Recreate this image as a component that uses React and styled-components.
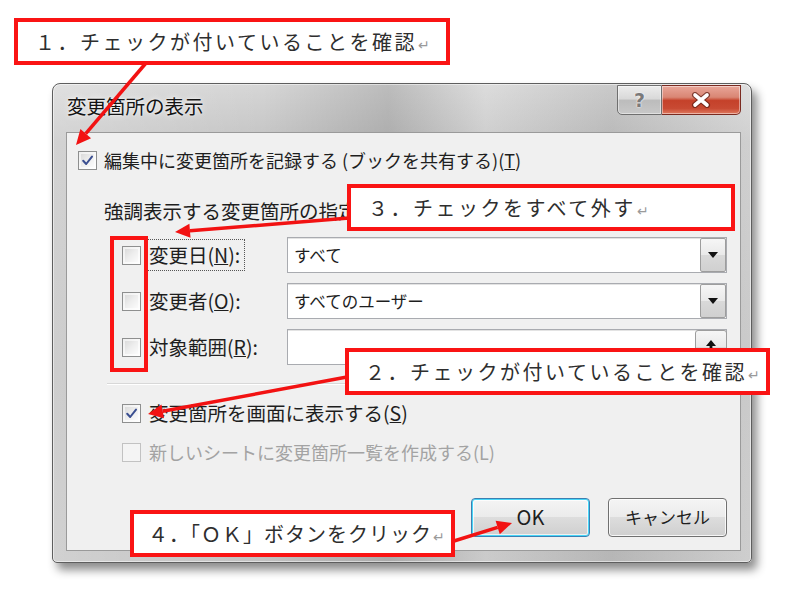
import React from 'react';
import styled, { createGlobalStyle } from 'styled-components';

const GlobalStyle = createGlobalStyle`
  html, body {
    margin: 0;
    padding: 0;
    background: #ffffff;
  }
  body {
    font-family: "Noto Sans CJK JP", "Noto Sans", sans-serif;
  }
`;

const jp = `"Noto Sans CJK JP", "Noto Sans", sans-serif`;

const Page = styled.div`
  position: relative;
  width: 800px;
  height: 594px;
  box-sizing: border-box;
  padding: 83px 0 0 52px;
  overflow: hidden;
  background: #ffffff;
`;

// ---- window frame ----
const Window = styled.div`
  width: 700px;
  height: 480px;
  box-sizing: border-box;
  padding: 0 10px 11px 13px;
  display: flex;
  flex-direction: column;
  border: 1px solid #5e5e5e;
  border-radius: 8px 8px 5px 5px;
  background:
    linear-gradient(90deg, rgba(255,255,255,0.25) 0%, rgba(0,0,0,0) 30%, rgba(0,0,0,0.12) 48%, rgba(255,255,255,0.15) 62%, rgba(0,0,0,0.06) 80%, rgba(255,255,255,0.2) 100%),
    linear-gradient(180deg, #d6d6d6 0%, #c4c4c4 12%, #bdbdbd 60%, #c2c2c2 100%);
  box-shadow: 5px 7px 10px rgba(0, 0, 0, 0.45), inset 0 0 0 1px rgba(255,255,255,0.5);
`;

const TitleBar = styled.div`
  height: 48px;
  display: flex;
  align-items: flex-start;
  justify-content: space-between;
`;

const Title = styled.div`
  margin: 10px 0 0 1px;
  font-family: ${jp};
  font-size: 19.5px;
  line-height: 24px;
  color: #141414;
  text-shadow: 0 0 6px rgba(255,255,255,0.9), 0 0 2px rgba(255,255,255,0.8);
`;

const CaptionButtons = styled.div`
  display: flex;
  margin-top: 1px;
`;

const CaptionButton = styled.div`
  width: ${(p) => p.width}px;
  height: 30px;
  box-sizing: border-box;
  display: flex;
  align-items: center;
  justify-content: center;
  border: 1px solid ${(p) => (p.close ? '#7a2a20' : '#6f6f6f')};
  border-left: ${(p) => (p.close ? 'none' : '1px solid #6f6f6f')};
  border-radius: ${(p) => (p.close ? '0 0 5px 0' : '0 0 0 5px')};
  background: ${(p) =>
    p.close
      ? 'linear-gradient(180deg, #e9a699 0%, #d98674 40%, #c5412a 52%, #c84a33 80%, #e07a5f 100%)'
      : 'linear-gradient(180deg, #ececec 0%, #d9d9d9 45%, #bcbcbc 52%, #c8c8c8 100%)'};
  box-shadow: inset 0 0 0 1px rgba(255,255,255,0.45);
  font-family: "DejaVu Sans", sans-serif;
  font-weight: bold;
  font-size: 19px;
  color: #7a7a7a;
  text-shadow: 0 0 2px #ffffff, 0 0 1px #ffffff;
`;

const Client = styled.div`
  flex: 1;
  box-sizing: border-box;
  border: 1px solid #9a9a9a;
  background: #f0f0f0;
  padding: 17px 13px 0 11px;
  display: flex;
  flex-direction: column;
  font-family: ${jp};
  font-size: 18px;
  color: #1e1e1e;
`;

// ---- checkbox ----
const Box = styled.span`
  flex: none;
  width: 19px;
  height: 19px;
  box-sizing: border-box;
  border: 1px solid ${(p) => (p.disabled ? '#c2c2c2' : '#8e8f8f')};
  background: ${(p) =>
    p.disabled
      ? '#f4f4f4'
      : 'linear-gradient(135deg, #d6d6d6 0%, #eeeeee 50%, #ffffff 100%)'};
  box-shadow: inset 0 0 0 2px ${(p) => (p.disabled ? '#f4f4f4' : 'rgba(255,255,255,0.6)')};
  display: flex;
  align-items: center;
  justify-content: center;
`;

const Check = ({ checked, disabled }) => (
  <Box disabled={disabled}>
    {checked && (
      <svg width="13" height="13" viewBox="0 0 13 13">
        <path d="M2.2 6.8 L5.2 10 L11 2.6" fill="none" stroke="#3b4f91" strokeWidth="2" strokeLinecap="round" strokeLinejoin="round" />
      </svg>
    )}
  </Box>
);

const CheckRow = styled.div`
  display: flex;
  align-items: center;
  gap: ${(p) => p.gap || 8}px;
  height: 20px;
  margin-top: ${(p) => p.top || 0}px;
  margin-left: ${(p) => p.indent || 0}px;
  font-size: ${(p) => p.size || 18}px;
  color: ${(p) => (p.disabled ? '#a3a3a3' : 'inherit')};
  line-height: 20px;
`;

const GroupLabel = styled.div`
  margin: 29px 0 0 26px;
  line-height: 24px;
  height: 24px;
  font-size: 19.5px;
  white-space: nowrap;
`;

const OptionGrid = styled.div`
  margin: 14px 0 0 44px;
  display: grid;
  grid-template-columns: 19px 128px 1fr;
  column-gap: 9px;
  row-gap: 10px;
  align-items: center;
`;

const OptLabel = styled.span`
  justify-self: start;
  font-size: 19.5px;
  line-height: 24px;
  padding: 3px 4px 3px 1px;
  margin-left: -2px;
  outline: ${(p) => (p.focused ? '1px dotted #555' : 'none')};
`;

const Field = styled.div`
  height: 36px;
  box-sizing: border-box;
  border: 1px solid #a9abb0;
  background: #ffffff;
  display: flex;
  align-items: center;
  padding: 0 0 0 6px;
  box-shadow: inset 0 1px 0 #e3e3e3;
`;

const FieldText = styled.span`
  flex: 1;
  font-size: 16.5px;
  line-height: 22px;
`;

const DropButton = styled.span`
  width: 26px;
  height: 34px;
  box-sizing: border-box;
  border: 1px solid #9d9d9d;
  border-radius: 2px;
  background: linear-gradient(180deg, #f6f6f6 0%, #e9e9e9 50%, #d9d9d9 51%, #d0d0d0 100%);
  display: flex;
  align-items: center;
  justify-content: center;
`;

const RefButton = styled(DropButton)`
  width: 32px;
  border-radius: 3px;
  margin-right: -1px;
`;

const Separator = styled.div`
  margin: 18px -13px 0 29px;
  height: 1px;
  background: #d8d8d8;
  border-bottom: 1px solid #ffffff;
`;

const ButtonRow = styled.div`
  display: flex;
  justify-content: flex-end;
  gap: 18px;
  margin-top: 36px;
`;

const PushButton = styled.div`
  width: 119px;
  height: 39px;
  box-sizing: border-box;
  border: 1px solid ${(p) => (p.primary ? '#3c7fb1' : '#707070')};
  border-radius: 4px;
  background: linear-gradient(180deg, #f4f4f4 0%, #ebebeb 49%, #dddddd 50%, #cfcfcf 100%);
  box-shadow: ${(p) =>
    p.primary
      ? 'inset 0 0 0 1px #48d6f8, inset 0 0 0 2px rgba(255,255,255,0.7)'
      : 'inset 0 0 0 1px rgba(255,255,255,0.8)'};
  display: flex;
  align-items: center;
  justify-content: center;
  font-size: ${(p) => (p.primary ? 20 : 17)}px;
  color: #1e1e1e;
  padding-bottom: 2px;
`;

// ---- annotations (lie over the screenshot) ----
const Callout = styled.div`
  position: absolute;
  left: ${(p) => p.x}px;
  top: ${(p) => p.y}px;
  width: ${(p) => p.w}px;
  height: 47px;
  box-sizing: border-box;
  border: 4px solid #fa1414;
  background: #ffffff;
  display: flex;
  align-items: center;
  padding-left: ${(p) => p.pad || 17}px;
  font-family: ${jp};
  font-size: 20px;
  letter-spacing: ${(p) => (p.tight ? 1 : 2.5)}px;
  color: #2e2e2e;
  white-space: nowrap;
  z-index: 3;
`;

const Return = styled.span`
  font-size: 14px;
  color: #9a9a9a;
  letter-spacing: 0;
  margin-left: 1px;
  position: relative;
  top: 2px;
`;

const Frame = styled.div`
  position: absolute;
  left: 110px;
  top: 236px;
  width: 38px;
  height: 136px;
  box-sizing: border-box;
  border: 4px solid #fa1414;
  z-index: 2;
`;

const Arrows = styled.svg`
  position: absolute;
  left: 0;
  top: 0;
  z-index: 2;
  pointer-events: none;
`;

const Arrow = ({ x1, y1, x2, y2 }) => {
  const a = Math.atan2(y2 - y1, x2 - x1);
  const len = 15;
  const half = 7;
  const bx = x2 - len * Math.cos(a);
  const by = y2 - len * Math.sin(a);
  const p1 = `${bx + half * Math.sin(a)},${by - half * Math.cos(a)}`;
  const p2 = `${bx - half * Math.sin(a)},${by + half * Math.cos(a)}`;
  return (
    <g>
      <line x1={x1} y1={y1} x2={bx} y2={by} stroke="#f21212" strokeWidth="3.5" />
      <polygon points={`${x2},${y2} ${p1} ${p2}`} fill="#f21212" />
    </g>
  );
};

const Tri = () => (
  <svg width="10" height="6" viewBox="0 0 10 6">
    <path d="M0 0 H10 L5 6 Z" fill="#111" />
  </svg>
);

const UpArrow = () => (
  <svg width="12" height="16" viewBox="0 0 12 16">
    <path d="M6 1 L11 7 H7.4 V16 H4.6 V7 H1 Z" fill="#111" />
  </svg>
);

const CloseGlyph = () => (
  <svg width="20" height="16" viewBox="0 0 20 16">
    <path d="M4 3 L16 13 M16 3 L4 13" stroke="#5c1c12" strokeWidth="6" strokeLinecap="round" opacity="0.7" />
    <path d="M4 3 L16 13 M16 3 L4 13" stroke="#ffffff" strokeWidth="3.6" strokeLinecap="round" />
  </svg>
);

export default function App() {
  return (
    <>
      <GlobalStyle />
      <Page>
        <Window>
          <TitleBar>
            <Title>変更箇所の表示</Title>
            <CaptionButtons>
              <CaptionButton width={45}>?</CaptionButton>
              <CaptionButton width={79} close><CloseGlyph /></CaptionButton>
            </CaptionButtons>
          </TitleBar>
          <Client>
            <CheckRow gap={7}>
              <Check checked />
              <span>編集中に変更箇所を記録する (ブックを共有する)(<u>T</u>)</span>
            </CheckRow>
            <GroupLabel>強調表示する変更箇所の指定</GroupLabel>
            <OptionGrid>
              <Check />
              <OptLabel focused>変更日(<u>N</u>):</OptLabel>
              <Field>
                <FieldText>すべて</FieldText>
                <DropButton><Tri /></DropButton>
              </Field>
              <Check />
              <OptLabel>変更者(<u>O</u>):</OptLabel>
              <Field>
                <FieldText>すべてのユーザー</FieldText>
                <DropButton><Tri /></DropButton>
              </Field>
              <Check />
              <OptLabel>対象範囲(<u>R</u>):</OptLabel>
              <Field>
                <FieldText />
                <RefButton><UpArrow /></RefButton>
              </Field>
            </OptionGrid>
            <Separator />
            <CheckRow top={18} indent={44} size={19.5}>
              <Check checked />
              <span>変更箇所を画面に表示する(<u>S</u>)</span>
            </CheckRow>
            <CheckRow top={19} indent={44} disabled>
              <Check disabled />
              <span>新しいシートに変更箇所一覧を作成する(L)</span>
            </CheckRow>
            <ButtonRow>
              <PushButton primary>OK</PushButton>
              <PushButton>キャンセル</PushButton>
            </ButtonRow>
          </Client>
        </Window>

        <Frame />
        <Arrows width="800" height="594" viewBox="0 0 800 594">
          <Arrow x1={146} y1={63} x2={76} y2={145} />
          <Arrow x1={349} y1={218} x2={175} y2={232} />
          <Arrow x1={347} y1={377} x2={148} y2={414} />
          <Arrow x1={454} y1={541} x2={512} y2={523} />
        </Arrows>

        <Callout x={14} y={18} w={436}>
          １．チェックが付いていることを確認<Return>↵</Return>
        </Callout>
        <Callout x={347} y={184} w={388}>
          ３．チェックをすべて外す<Return>↵</Return>
        </Callout>
        <Callout x={345} y={348} w={425} pad={16}>
          ２．チェックが付いていることを確認<Return>↵</Return>
        </Callout>
        <Callout x={130} y={510} w={325} pad={14} tight>
          ４．「ＯＫ」ボタンをクリック<Return>↵</Return>
        </Callout>
      </Page>
    </>
  );
}
